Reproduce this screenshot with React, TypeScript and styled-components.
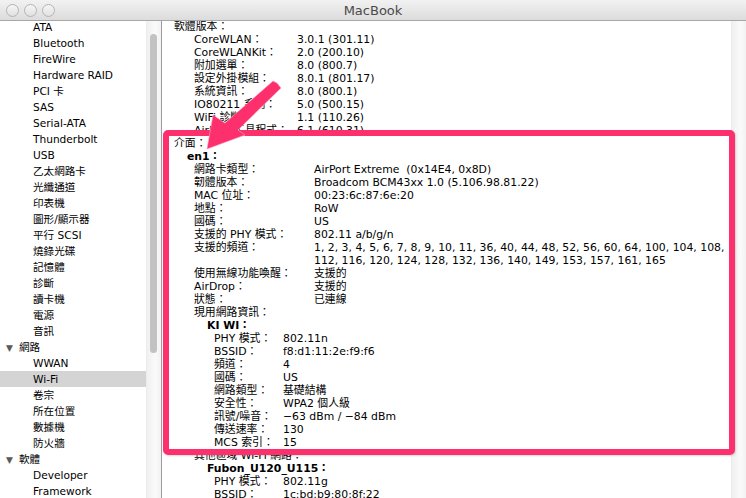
import React from "react";
import styled, { createGlobalStyle } from "styled-components";

const GlobalStyle = createGlobalStyle`
  html, body {
    margin: 0;
    padding: 0;
    background: #fff;
  }
  body {
    font-family: "DejaVu Sans", "Noto Sans CJK TC", sans-serif;
  }
`;

const PINK = "#fe2f6d";

const Window = styled.div`
  position: relative;
  width: 746px;
  height: 498px;
  overflow: hidden;
  display: flex;
  flex-direction: column;
  background: #fff;
`;

const TitleBar = styled.div`
  height: 20px;
  flex: none;
  display: flex;
  align-items: center;
  position: relative;
  background: linear-gradient(#f2f2f2, #dcdcdc);
  border-bottom: 1px solid #a8a8a8;
`;

const Lights = styled.div`
  display: flex;
  gap: 5px;
  padding-left: 6px;
`;

const Light = styled.span`
  width: 11px;
  height: 11px;
  border-radius: 50%;
  border: 1px solid #b4b4b4;
  background: linear-gradient(#f6f6f6, #e0e0e0);
`;

const Title = styled.div`
  position: absolute;
  left: 0;
  right: 0;
  text-align: center;
  font-size: 13px;
  color: #4a4a4a;
  pointer-events: none;
`;

const Body = styled.div`
  flex: 1;
  display: flex;
  min-height: 0;
`;

const Sidebar = styled.div`
  width: 146px;
  flex: none;
  overflow: hidden;
  font-size: 10.6px;
  color: #000;
`;

const SideList = styled.div`
  margin-top: -2px;
`;

const SideItem = styled.div<{ $group?: boolean; $selected?: boolean }>`
  height: 16px;
  line-height: 16px;
  padding-left: ${(p) => (p.$group ? 6 : 33)}px;
  background: ${(p) => (p.$selected ? "#d4d4d4" : "transparent")};
  white-space: nowrap;
`;

const Caret = styled.span`
  display: inline-block;
  width: 13px;
  font-size: 9px;
  color: #5a5a5a;
`;

const Track = styled.div<{ $border?: boolean }>`
  width: 14px;
  flex: none;
  position: relative;
  background: linear-gradient(90deg, #f0f0f0, #fafafa 60%, #f2f2f2);
  border-left: 1px solid #ececec;
  border-right: ${(p) => (p.$border ? "1px solid #9c9c9c" : "none")};
`;

const Thumb = styled.div`
  position: absolute;
  left: 3px;
  width: 7px;
  top: 13px;
  height: 319px;
  border-radius: 4px;
  background: #c2c2c2;
`;

const Content = styled.div`
  flex: 1;
  overflow: hidden;
  font-size: 10.85px;
  color: #000;
`;

const Report = styled.div`
  margin-top: -1.5px;
`;

const Row = styled.div<{ $indent: number; $bold?: boolean }>`
  display: flex;
  height: 13px;
  line-height: 13px;
  padding-left: ${(p) => p.$indent}px;
  font-weight: ${(p) => (p.$bold ? "bold" : "normal")};
  white-space: pre;
`;

const Label = styled.span<{ $w: number }>`
  width: ${(p) => p.$w}px;
  flex: none;
`;

const Value = styled.span``;

const Frame = styled.div`
  position: absolute;
  left: 163px;
  top: 130px;
  width: 572px;
  height: 325px;
  box-sizing: border-box;
  border: 6.5px solid ${PINK};
  border-radius: 5px;
  box-shadow: 1px 1px 2px rgba(0, 0, 0, 0.15);
  pointer-events: none;
`;

const ArrowSvg = styled.svg`
  position: absolute;
  left: 0;
  top: 0;
  pointer-events: none;
`;

type Side = { t: string; group?: boolean; selected?: boolean };

const sideItems: Side[] = [
  { t: "ATA" },
  { t: "Bluetooth" },
  { t: "FireWire" },
  { t: "Hardware RAID" },
  { t: "PCI 卡" },
  { t: "SAS" },
  { t: "Serial-ATA" },
  { t: "Thunderbolt" },
  { t: "USB" },
  { t: "乙太網路卡" },
  { t: "光纖通道" },
  { t: "印表機" },
  { t: "圖形/顯示器" },
  { t: "平行 SCSI" },
  { t: "燒錄光碟" },
  { t: "記憶體" },
  { t: "診斷" },
  { t: "讀卡機" },
  { t: "電源" },
  { t: "音訊" },
  { t: "網路", group: true },
  { t: "WWAN" },
  { t: "Wi-Fi", selected: true },
  { t: "卷宗" },
  { t: "所在位置" },
  { t: "數據機" },
  { t: "防火牆" },
  { t: "軟體", group: true },
  { t: "Developer" },
  { t: "Framework" },
];

type Line = { i: number; l: string; v?: string; w?: number; b?: boolean };

const lines: Line[] = [
  { i: 12, l: "軟體版本：" },
  { i: 32, w: 103, l: "CoreWLAN：", v: "3.0.1 (301.11)" },
  { i: 32, w: 103, l: "CoreWLANKit：", v: "2.0 (200.10)" },
  { i: 32, w: 103, l: "附加選單：", v: "8.0 (800.7)" },
  { i: 32, w: 103, l: "設定外掛模組：", v: "8.0.1 (801.17)" },
  { i: 32, w: 103, l: "系統資訊：", v: "8.0 (800.1)" },
  { i: 32, w: 103, l: "IO80211 系列：", v: "5.0 (500.15)" },
  { i: 32, w: 103, l: "WiFi 診斷：", v: "1.1 (110.26)" },
  { i: 32, w: 103, l: "AirPort 工具程式：", v: "6.1 (610.31)" },
  { i: 12, l: "介面：" },
  { i: 25, l: "en1：", b: true },
  { i: 32, w: 120, l: "網路卡類型：", v: "AirPort Extreme  (0x14E4, 0x8D)" },
  { i: 32, w: 120, l: "韌體版本：", v: "Broadcom BCM43xx 1.0 (5.106.98.81.22)" },
  { i: 32, w: 120, l: "MAC 位址：", v: "00:23:6c:87:6e:20" },
  { i: 32, w: 120, l: "地點：", v: "RoW" },
  { i: 32, w: 120, l: "國碼：", v: "US" },
  { i: 32, w: 120, l: "支援的 PHY 模式：", v: "802.11 a/b/g/n" },
  {
    i: 32,
    w: 120,
    l: "支援的頻道：",
    v: "1, 2, 3, 4, 5, 6, 7, 8, 9, 10, 11, 36, 40, 44, 48, 52, 56, 60, 64, 100, 104, 108,",
  },
  {
    i: 32,
    w: 120,
    l: "",
    v: "112, 116, 120, 124, 128, 132, 136, 140, 149, 153, 157, 161, 165",
  },
  { i: 32, w: 120, l: "使用無線功能喚醒：", v: "支援的" },
  { i: 32, w: 120, l: "AirDrop：", v: "支援的" },
  { i: 32, w: 120, l: "狀態：", v: "已連線" },
  { i: 32, l: "現用網路資訊：" },
  { i: 45, l: "KI WI：", b: true },
  { i: 52, w: 69, l: "PHY 模式：", v: "802.11n" },
  { i: 52, w: 69, l: "BSSID：", v: "f8:d1:11:2e:f9:f6" },
  { i: 52, w: 69, l: "頻道：", v: "4" },
  { i: 52, w: 69, l: "國碼：", v: "US" },
  { i: 52, w: 69, l: "網路類型：", v: "基礎結構" },
  { i: 52, w: 69, l: "安全性：", v: "WPA2 個人級" },
  { i: 52, w: 69, l: "訊號/噪音：", v: "−63 dBm / −84 dBm" },
  { i: 52, w: 69, l: "傳送速率：", v: "130" },
  { i: 52, w: 69, l: "MCS 索引：", v: "15" },
  { i: 32, l: "其他區域 Wi-Fi 網路：" },
  { i: 45, l: "Fubon_U120_U115：", b: true },
  { i: 52, w: 69, l: "PHY 模式：", v: "802.11g" },
  { i: 52, w: 69, l: "BSSID：", v: "1c:bd:b9:80:8f:22" },
];

export default function App() {
  return (
    <>
      <GlobalStyle />
      <Window>
        <TitleBar>
          <Lights>
            <Light />
            <Light />
            <Light />
          </Lights>
          <Title>MacBook</Title>
        </TitleBar>
        <Body>
          <Sidebar>
            <SideList>
              {sideItems.map((s, k) => (
                <SideItem key={k} $group={s.group} $selected={s.selected}>
                  {s.group && <Caret>▼</Caret>}
                  {s.t}
                </SideItem>
              ))}
            </SideList>
          </Sidebar>
          <Track $border>
            <Thumb />
          </Track>
          <Content>
            <Report>
              {lines.map((ln, k) => (
                <Row key={k} $indent={ln.i} $bold={ln.b}>
                  {ln.w ? <Label $w={ln.w}>{ln.l}</Label> : ln.l}
                  {ln.v && <Value>{ln.v}</Value>}
                </Row>
              ))}
            </Report>
          </Content>
          <Track />
        </Body>
        <Frame />
        <ArrowSvg width="746" height="498" viewBox="0 0 746 498">
          <polygon
            points="277,83 281,88 238,130 245,135 207,149 213,115 225,123 273,81"
            fill={PINK}
            stroke="#f8aac2"
            strokeWidth="0.6"
          />
        </ArrowSvg>
      </Window>
    </>
  );
}
